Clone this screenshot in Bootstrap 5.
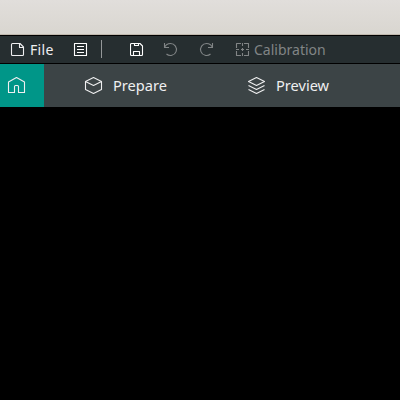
<!DOCTYPE html>
<html lang="en">
<head>
<meta charset="utf-8">
<meta name="viewport" content="width=device-width, initial-scale=1">
<title>Slicer</title>
<link href="https://cdn.jsdelivr.net/npm/bootstrap@5.3.0/dist/css/bootstrap.min.css" rel="stylesheet">
<style>
body{background:#000;font-family:"Noto Sans",sans-serif;font-size:14px;line-height:20px;color:#fff;height:100vh}
svg{display:block;flex:none;fill:none;stroke:currentColor;stroke-width:1.1;stroke-linejoin:round}
.titlebar{height:35px;background:linear-gradient(#e1dedb,#d9d6d0);border-bottom:1px solid #bfb8ad}
.toolbar{height:29px;background:#262e30;border-top:1px solid #000;border-bottom:1px solid #000;padding-left:10px}
.menu-file{gap:5px;width:63px;color:#efeff0}
.menu-file span{letter-spacing:.3px}
.rule{width:1px;height:18px;background:#949899;margin:0 28px 1px 13px}
.undo-btn{margin-left:19px}
.redo-btn{margin-left:21px}
.calib{margin-left:21px;gap:4px}
.dim{color:#818586}
.tabs{height:43px;background:#3c4446;color:#efeff0;font-size:14.6px}
.home{width:44px;background:#009688;padding-left:7px}
.tab-item{gap:10px;width:163px;padding-left:40px}
.tab-item span{padding-bottom:2px}
</style>
<script src="https://cdn.jsdelivr.net/npm/bootstrap@5.3.0/dist/js/bootstrap.bundle.min.js"></script>
</head>
<body class="overflow-hidden">
<header class="titlebar"></header>
<div class="toolbar d-flex align-items-center">
  <div class="menu-file d-flex align-items-center">
    <svg width="15" height="15"><path d="M10 1.5H2.500Q1.500 1.500 1.500 2.500V12.500Q1.500 13.500 2.500 13.500H12.500Q13.500 13.500 13.500 12.500V5ZM9.500 1.500V5.500H13.500"/></svg>
    <span>File</span>
  </div>
  <svg width="15" height="15"><path d="M1.500 1.500H13.500V13.500H1.500ZM4 4.500H11M4 7.500H11M4 10.500H11"/></svg>
  <div class="rule"></div>
  <svg width="14" height="15"><path d="M1.500 1.500H10L12.500 4V12.500Q12.500 13.500 11.500 13.500H1.500Q.5 13.500 .5 12.500V2.500Q.5 1.500 1.500 1.500ZM4.500 1.500V3.500H8.500V1.500M3.500 13.500V9.500H9.500V13.500"/></svg>
  <svg class="undo-btn dim" width="15" height="15"><path d="M1.500 1V5.500H6M1.500 5.500C2.600 3 5 1.500 7.500 1.500A6 6 0 1 1 3.500 12"/></svg>
  <svg class="redo-btn dim" width="15" height="15"><path d="M13.500 1V5.500H9M13.500 5.500C12.400 3 10 1.500 7.500 1.500A6 6 0 1 0 11.500 12"/></svg>
  <div class="calib dim d-flex align-items-center">
    <svg width="15" height="15"><path d="M6 1.500H1.500V6M9 1.500H13.500V6M1.500 9V13.500H6M13.500 9V13.500H9M7.500 1V4M7.500 11V14M1 7.500H4M11 7.500H14M6 7.500H9M7.500 6V9"/></svg>
    <span>Calibration</span>
  </div>
</div>
<nav class="tabs d-flex">
  <div class="home d-flex align-items-center">
    <svg width="19" height="19"><path d="M1.500 6L9.500 1.500L17.500 6V16.500H11.500V10.500Q11.500 9.500 10.500 9.500H8.500Q7.500 9.500 7.500 10.500V16.500H1.500Z"/></svg>
  </div>
  <div class="tab-item d-flex align-items-center">
    <svg width="19" height="19"><path d="M9.500 1.500L17.500 5.500V13.500L9.500 17.500L1.500 13.500V5.500ZM1.500 5.500L9.500 9.500L17.500 5.500"/></svg>
    <span>Prepare</span>
  </div>
  <div class="tab-item d-flex align-items-center">
    <svg width="19" height="19"><path d="M9.500 1.500L17.500 5.500L9.500 9.500L1.500 5.500ZM1.500 9.500L9.500 13.500L17.500 9.500M1.500 13.500L9.500 17.500L17.500 13.500"/></svg>
    <span>Preview</span>
  </div>
</nav>
</body>
</html>
